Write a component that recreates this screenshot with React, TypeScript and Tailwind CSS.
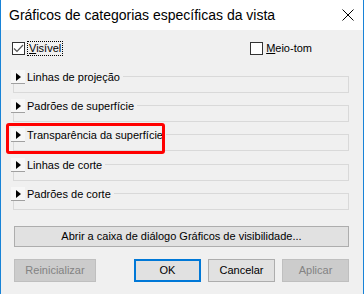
import React from 'react';

const groups = [
  'Linhas de projeção',
  'Padrões de superfície',
  'Transparência da superfície',
  'Linhas de corte',
  'Padrões de corte',
];

function GroupRow({ label, highlight, h }: { label: string; highlight?: boolean; h: string }) {
  return (
    <div className={`relative ${h}`}>
      {/* frame */}
      <div className="absolute left-[12px] right-[14px] top-[6px] h-[17px] border border-[#d9d9d9]" />
      <div className="relative flex items-center">
        <div className="ml-[10px] w-[14px] h-[14px] bg-[#f7f7f7] border-b border-[#a0a0a0] flex items-center justify-center">
          <svg width="5" height="8" viewBox="0 0 5 8" className="ml-[1px]">
            <path d="M0 0 L5 4 L0 8 Z" fill="#000" />
          </svg>
        </div>
        <span className="pl-[2px] pr-[3px] bg-[#f0f0f0] leading-[14px]">{label}</span>
      </div>
      {highlight && (
        <div className="absolute left-[5px] top-[-5px] w-[159px] h-[31px] border-[3px] border-[#ff0000] rounded-[3px]" />
      )}
    </div>
  );
}

export default function App() {
  return (
    <div className="w-[364px] h-[294px] overflow-hidden bg-[#f0f0f0] border-x border-[#1883d7] font-['Liberation_Sans',Arial,sans-serif] text-[11px] text-black">
      {/* Title bar */}
      <div className="h-[30px] bg-white flex items-center justify-between pl-[8px] pr-[8px]">
        <span className="text-[14px] leading-none">Gráficos de categorias específicas da vista</span>
        <svg width="12" height="12" viewBox="0 0 12 12" className="mr-[1px]">
          <path d="M0.5 0.5 L11.5 11.5 M11.5 0.5 L0.5 11.5" stroke="#000" strokeWidth="1" />
        </svg>
      </div>

      {/* Checkboxes */}
      <div className="flex items-center justify-between mt-[12px] pl-[11px] pr-[51px] h-[13px]">
        <label className="flex items-center">
          <span className="w-[13px] h-[13px] border border-[#333] bg-white flex items-center justify-center">
            <svg width="11" height="9" viewBox="0 0 11 9">
              <path d="M1 4.5 L4 7.5 L10 1" stroke="#555" strokeWidth="1.2" fill="none" />
            </svg>
          </span>
          <span className="ml-[2px] px-[1px] border border-dotted border-black leading-[13px]">
            <span className="underline underline-offset-[1px]">V</span>isível
          </span>
        </label>
        <label className="flex items-center">
          <span className="w-[13px] h-[13px] border border-[#333] bg-white" />
          <span className="ml-[3px] leading-[13px]">
            <span className="underline underline-offset-[1px]">M</span>eio-tom
          </span>
        </label>
      </div>

      {/* Groups */}
      <div className="mt-[15px]">
        <GroupRow label={groups[0]} h="h-[29px]" />
        <GroupRow label={groups[1]} h="h-[29px]" />
        <GroupRow label={groups[2]} h="h-[30px]" highlight />
        <GroupRow label={groups[3]} h="h-[29px]" />
        <GroupRow label={groups[4]} h="h-[23px]" />
      </div>

      {/* Visibility dialog button */}
      <div className="pl-[13px] pr-[14px] mt-[16px]">
        <button className="w-full h-[21px] bg-[#e1e1e1] border border-[#adadad] leading-none">
          Abrir a caixa de diálogo Gráficos de visibilidade...
        </button>
      </div>

      {/* Footer buttons */}
      <div className="flex justify-between pl-[13px] pr-[14px] mt-[12px]">
        <button disabled className="w-[82px] h-[23px] bg-[#cccccc] border border-[#bfbfbf] text-[#838383]">
          Reinicializar
        </button>
        <div className="flex gap-[7px]">
          <button className="w-[67px] h-[23px] bg-[#e1e1e1] border-2 border-[#0078d7]">OK</button>
          <button className="w-[67px] h-[23px] bg-[#e1e1e1] border border-[#adadad]">Cancelar</button>
          <button disabled className="w-[67px] h-[23px] bg-[#cccccc] border border-[#bfbfbf] text-[#838383]">
            Aplicar
          </button>
        </div>
      </div>
    </div>
  );
}
